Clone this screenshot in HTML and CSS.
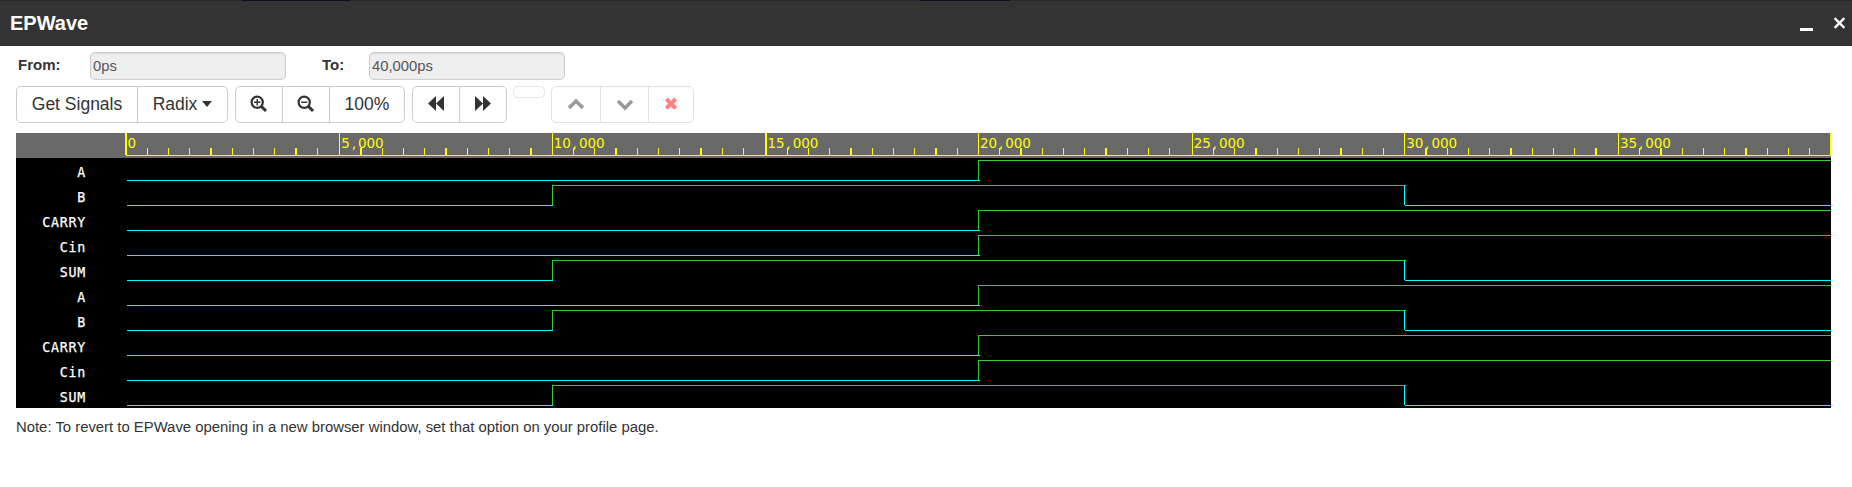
FILE: index.html
```
<!DOCTYPE html>
<html lang="en">
<head>
<meta charset="utf-8">
<title>EPWave</title>
<link rel="stylesheet" href="styles.css">
</head>
<body>
<header class="titlebar">
  <h1 class="title">EPWave</h1>
  <svg class="window-controls" width="50" height="20" viewBox="0 0 50 20"><path d="M1 14.5h13" stroke="#fff" stroke-width="3"/><path d="M36.5 4l8 8M44.5 4l-8 8" stroke="#fff" stroke-width="2.4" stroke-linecap="square"/></svg>
</header>
<main class="content">
  <form class="range">
    <label class="from">From:</label><input class="field" value="0ps" disabled>
    <label class="to">To:</label><input class="field" value="40,000ps" disabled>
  </form>
  <div class="toolbar">
    <div class="group">
      <button class="btn signals">Get Signals</button>
      <button class="btn radix">Radix<span class="caret"></span></button>
    </div>
    <div class="group">
      <button class="btn w46"><svg width="18" height="18" viewBox="0 0 18 18"><g fill="none" stroke="#333"><circle cx="7.2" cy="7.2" r="5.6" stroke-width="2.2"/><path d="M11.5 11.5l4.5 4.5" stroke-width="3"/><path d="M4 7.2h6.4M7.2 4v6.4" stroke-width="1.4"/></g></svg></button>
      <button class="btn w47"><svg width="18" height="18" viewBox="0 0 18 18"><g fill="none" stroke="#333"><circle cx="7.2" cy="7.2" r="5.6" stroke-width="2.2"/><path d="M11.5 11.5l4.5 4.5" stroke-width="3"/><path d="M4 7.2h6.4" stroke-width="1.4"/></g></svg></button>
      <button class="btn percent">100%</button>
    </div>
    <div class="group seek">
      <button class="btn w46"><svg width="16" height="17" viewBox="0 0 16 17"><path d="M8 0v15L0 7.5zM16 0v15L8 7.5z" fill="#333"/></svg></button>
      <button class="btn w47"><svg width="16" height="17" viewBox="0 0 16 17"><path d="M0 0v15L8 7.5zM8 0v15L16 7.5z" fill="#333"/></svg></button>
    </div>
    <div class="group empty"></div>
    <div class="group faded">
      <button class="btn w48"><svg width="18" height="18" viewBox="0 0 18 18"><path d="M2 13l7-7 7 7" fill="none" stroke="#999" stroke-width="3.4"/></svg></button>
      <button class="btn w48"><svg width="18" height="18" viewBox="0 0 18 18"><path d="M2 6l7 7 7-7" fill="none" stroke="#999" stroke-width="3.4"/></svg></button>
      <button class="btn w45"><svg width="14" height="14" viewBox="0 0 14 14"><path d="M2.3 2l9.4 9.4M11.7 2L2.3 11.4" stroke="#ff8080" stroke-width="4"/></svg></button>
    </div>
  </div>
  <svg class="wave" width="1815" height="275" viewBox="16 133 1815 275">
    <defs>
      <g id="rise20"><path class="high" d="M978.5 22V2.5H1831"/><path class="low" d="M127 22.5H980"/></g>
      <g id="pulse"><path class="high" d="M552.5 22V2.5H1406"/><path class="low" d="M127 22.5H553M1404.5 2V22M1405 22.5H1831"/></g>
    </defs>
    <rect x="16" y="133" width="1815" height="275"/>
    <rect x="16" y="133" width="1815" height="25" fill="#696969"/>
    <g id="ruler"></g>
    <g id="signals"></g>
  </svg>
  <p class="note">Note: To revert to EPWave opening in a new browser window, set that option on your profile page.</p>
</main>
<script src="wave.js"></script>
</body>
</html>
```

FILE: styles.css
```
* { box-sizing: border-box; }
body { margin: 0; background: #fff; color: #333; font-family: "Liberation Sans", Arial, sans-serif; font-size: 15px; }
.titlebar { height: 46px; padding: 0 7px 0 10px; display: flex; align-items: center; justify-content: space-between; background: linear-gradient(#0c0c24, #0c0c24) 242px 0 / 108px 1px no-repeat, linear-gradient(#0c0c24, #0c0c24) 920px 0 / 90px 1px no-repeat, linear-gradient(#282828, #282828) 0 0 / 100% 1px no-repeat, #333; }
.title { margin: 0; color: #fff; font-size: 20px; line-height: 24px; }
.window-controls { margin-top: 4px; margin-right: -4px; }
.content { padding: 6px 16px 0; }
.range { display: flex; height: 28px; margin: 0; }
.range label { font-weight: bold; line-height: 26px; }
.from { width: 74px; padding-left: 2px; }
.to { width: 47px; margin-left: 36px; }
.field { width: 196px; height: 28px; padding: 0 3px 1px 2px; border: 1px solid #ccc; border-radius: 5px; background: #eee; box-shadow: inset 0 1px 1px rgba(0,0,0,.08); color: #555; font: 14.8px "Liberation Sans", Arial, sans-serif; }
.toolbar { display: flex; align-items: flex-start; margin-top: 6px; }
.group { display: flex; height: 37px; border: 1px solid #ccc; border-radius: 5px; margin-right: 7px; }
.btn { display: flex; align-items: center; justify-content: center; padding: 0 0 1px; background: none; border: 0; border-left: 1px solid #ccc; color: #333; font: 17.5px "Liberation Sans", Arial, sans-serif; }
.btn:first-child { border-left: 0; }
.signals { width: 120px; }
.radix { width: 90px; }
.caret { margin-left: 5px; border: 5px solid transparent; border-top: 6px solid #333; border-bottom: 0; }
.w45 { width: 45px; }
.w46 { width: 46px; }
.w47 { width: 47px; }
.w48 { width: 48px; }
.percent { width: 75px; }
.seek { margin-right: 6px; }
.empty { width: 32px; height: 12px; border-color: #e5e5e5; margin-right: 6px; }
.faded, .faded .btn { border-color: #e0e0e0; }
.wave { display: block; margin-top: 10px; }
.high, .low, .tick { fill: none; stroke: #32cd32; shape-rendering: crispEdges; }
.low { stroke: #0ff; }
.tick { stroke: #ff0; }
.thick { stroke-width: 2; }
.time { fill: #ff0; font: 13.5px "DejaVu Sans", sans-serif; }
.name { fill: #fff; stroke: #fff; stroke-width: .25px; font: 13.3px "DejaVu Sans Mono", monospace; letter-spacing: .75px; text-anchor: end; }
.note { margin: 9px 0 0; line-height: 20px; font-size: 14.87px; }
```

FILE: wave.js
```
const NS = 'http://www.w3.org/2000/svg';
function add(parent, tag, attrs, text) {
  const el = document.createElementNS(NS, tag);
  for (const key in attrs) el.setAttribute(key, attrs[key]);
  if (text) el.textContent = text;
  parent.appendChild(el);
}

const ruler = document.getElementById('ruler');
// A tick on a whole pixel covers both neighbours; others snap to one pixel.
function tick(x, top) {
  const whole = Number.isInteger(x);
  add(ruler, 'path', {
    class: whole ? 'tick thick' : 'tick',
    d: `M${whole ? x : Math.floor(x) + 0.5} ${top}V155`
  });
}
const starts = [126, 339.75, 552.25, 766, 978.5, 1192.25, 1404.75, 1618.5];
starts.forEach((start, i) => {
  const label = i ? `${i * 5},000` : '0';
  add(ruler, 'text', { class: 'time', y: 148, x: [...label].map((c, n) => start + 1.5 + n * 8.43 + (c === ',' ? 2 : 0)).join(' ') }, label);
  tick(start, 133);
  for (let n = 1; n < 10; n++) tick(start + n * 21.25, 148);
});
tick(1830.5, 133);
add(ruler, 'path', { class: 'tick', d: 'M126 155.5H1831' });

const signals = document.getElementById('signals');
const names = ['A', 'B', 'CARRY', 'Cin', 'SUM'];
[...names, ...names].forEach((name, row) => {
  const y = 158 + row * 25;
  add(signals, 'text', { class: 'name', x: 86, y: y + 19 }, name);
  add(signals, 'use', { href: name === 'B' || name === 'SUM' ? '#pulse' : '#rise20', y });
});
```
